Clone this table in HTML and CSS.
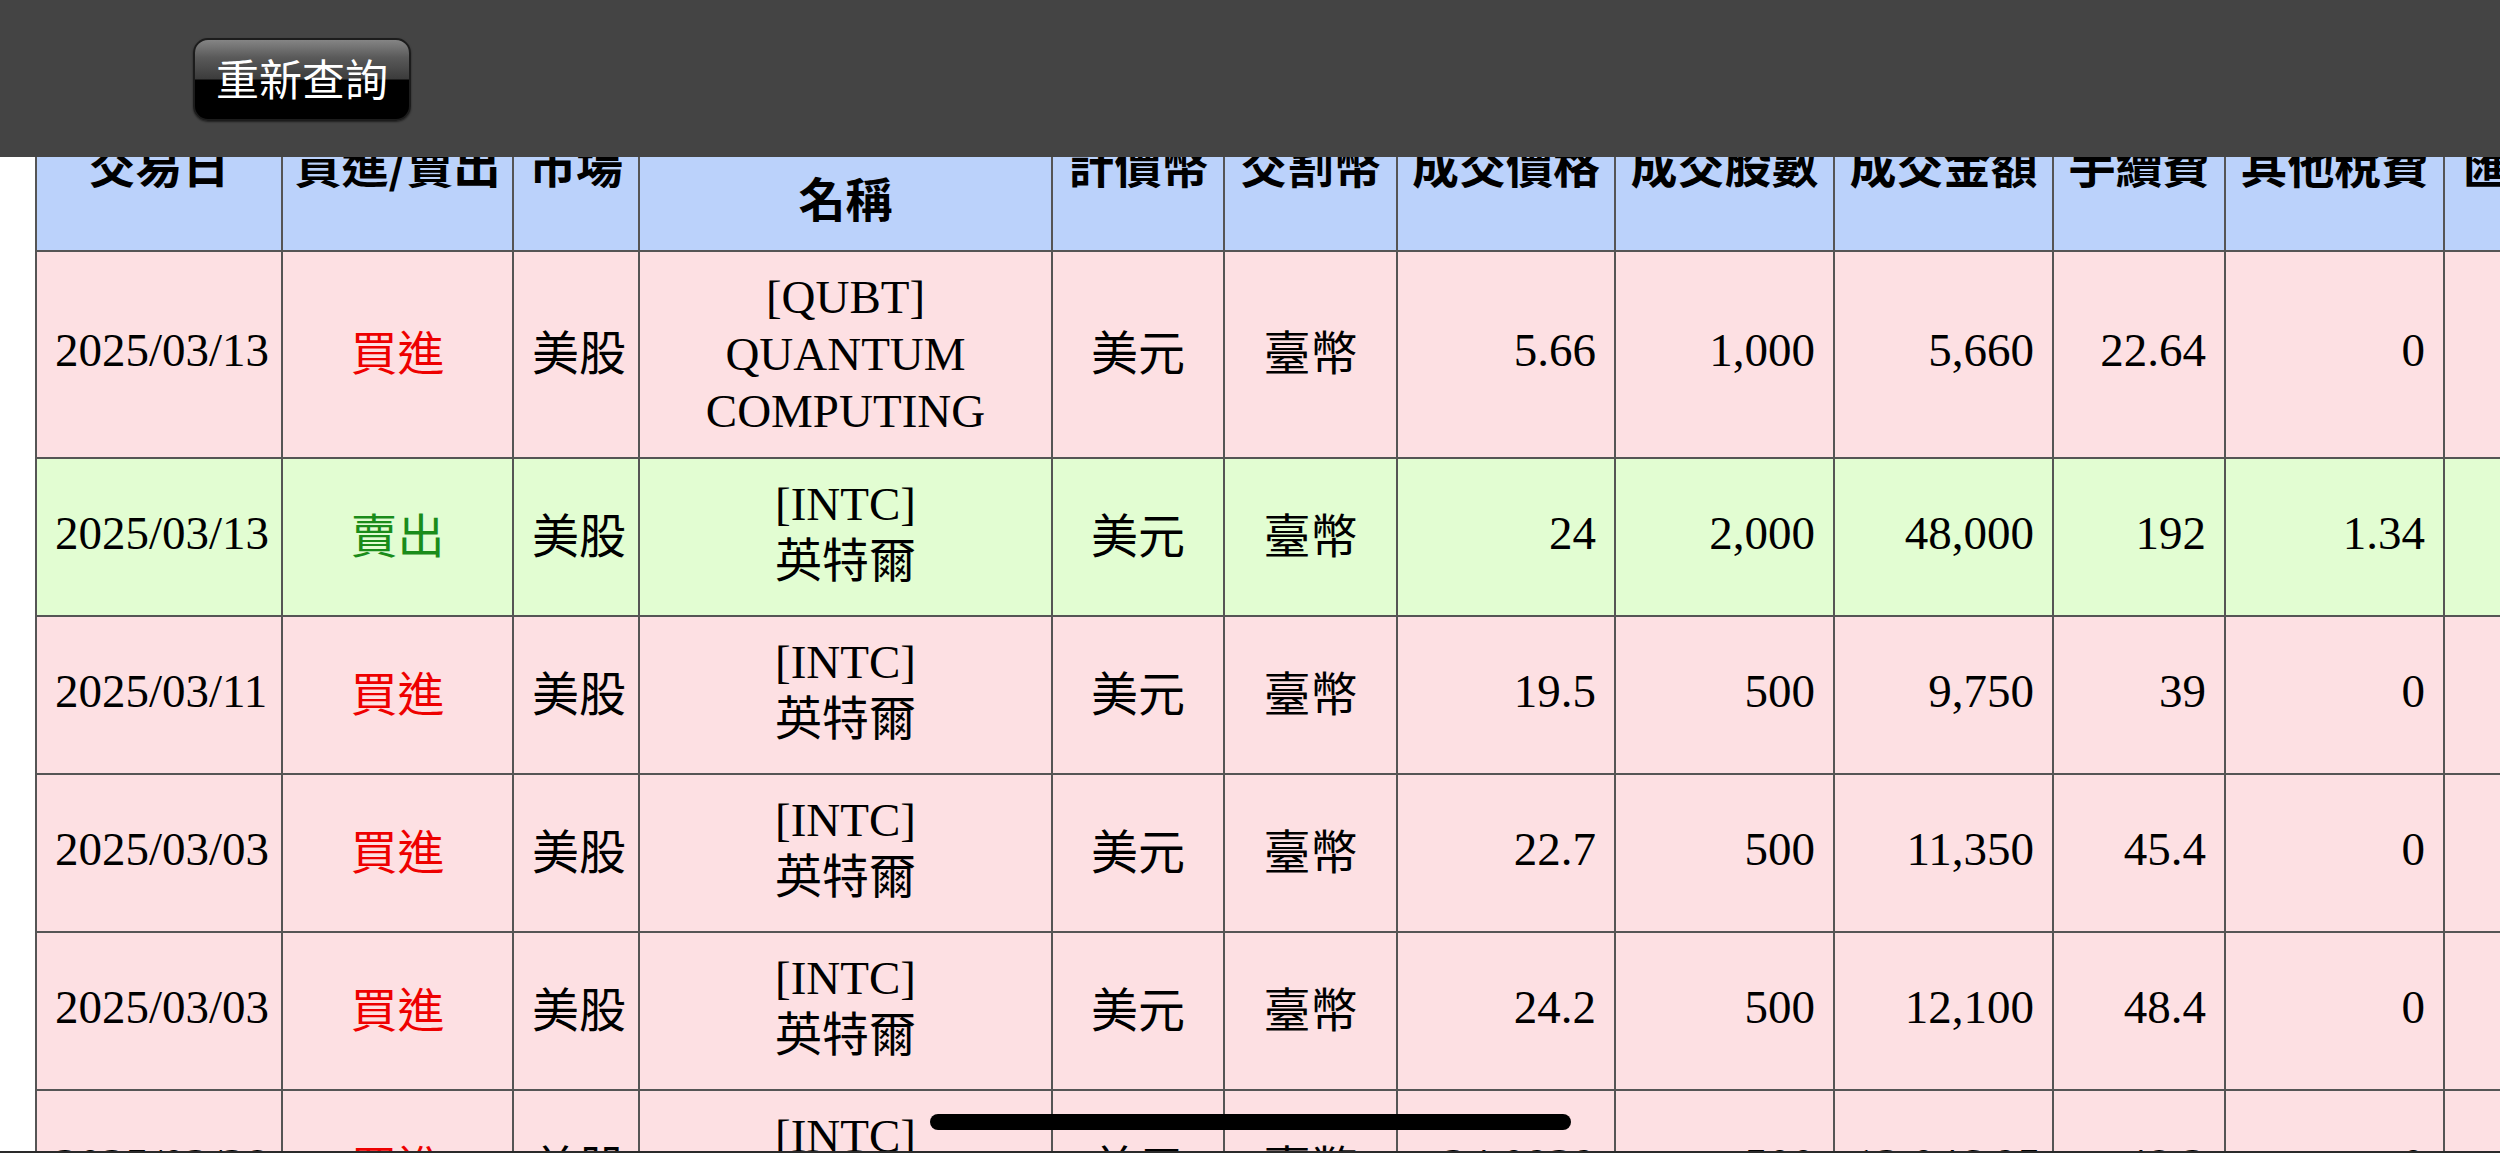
FILE: index.html
```html
<!DOCTYPE html>
<html lang="zh-Hant">
<head>
<meta charset="utf-8">
<title>交易明細</title>
<link rel="stylesheet" href="styles.css">
</head>
<body>
<header class="topbar">
  <button class="btn" type="button">重新查詢</button>
</header>

<main class="page">
  <table class="grid">
    <thead>
      <tr>
        <th class="w-date">交易日</th>
        <th class="w-side">買進/賣出</th>
        <th class="w-mkt">市場</th>
        <th class="w-name name">名稱</th>
        <th class="w-cur">計價幣</th>
        <th class="w-cur2">交割幣</th>
        <th class="w-num">成交價格</th>
        <th class="w-num2">成交股數</th>
        <th class="w-num2">成交金額</th>
        <th class="w-fee">手續費</th>
        <th class="w-num2">其他稅費</th>
        <th class="w-last last">匯率</th>
      </tr>
    </thead>
    <tbody>
      <tr class="buy">
        <td class="lat">2025/03/13</td>
        <td class="red">買進</td>
        <td>美股</td>
        <td><span class="ln">[QUBT]</span><span class="ln">QUANTUM</span><span class="ln">COMPUTING</span></td>
        <td>美元</td>
        <td>臺幣</td>
        <td class="lat num">5.66</td>
        <td class="lat num">1,000</td>
        <td class="lat num">5,660</td>
        <td class="lat num">22.64</td>
        <td class="lat num">0</td>
        <td class="lat num"></td>
      </tr>
      <tr class="sell">
        <td class="lat">2025/03/13</td>
        <td class="green">賣出</td>
        <td>美股</td>
        <td><span class="ln">[INTC]</span><span class="ln ln-cjk">英特爾</span></td>
        <td>美元</td>
        <td>臺幣</td>
        <td class="lat num">24</td>
        <td class="lat num">2,000</td>
        <td class="lat num">48,000</td>
        <td class="lat num">192</td>
        <td class="lat num">1.34</td>
        <td class="lat num"></td>
      </tr>
      <tr class="buy">
        <td class="lat">2025/03/11</td>
        <td class="red">買進</td>
        <td>美股</td>
        <td><span class="ln">[INTC]</span><span class="ln ln-cjk">英特爾</span></td>
        <td>美元</td>
        <td>臺幣</td>
        <td class="lat num">19.5</td>
        <td class="lat num">500</td>
        <td class="lat num">9,750</td>
        <td class="lat num">39</td>
        <td class="lat num">0</td>
        <td class="lat num"></td>
      </tr>
      <tr class="buy">
        <td class="lat">2025/03/03</td>
        <td class="red">買進</td>
        <td>美股</td>
        <td><span class="ln">[INTC]</span><span class="ln ln-cjk">英特爾</span></td>
        <td>美元</td>
        <td>臺幣</td>
        <td class="lat num">22.7</td>
        <td class="lat num">500</td>
        <td class="lat num">11,350</td>
        <td class="lat num">45.4</td>
        <td class="lat num">0</td>
        <td class="lat num"></td>
      </tr>
      <tr class="buy">
        <td class="lat">2025/03/03</td>
        <td class="red">買進</td>
        <td>美股</td>
        <td><span class="ln">[INTC]</span><span class="ln ln-cjk">英特爾</span></td>
        <td>美元</td>
        <td>臺幣</td>
        <td class="lat num">24.2</td>
        <td class="lat num">500</td>
        <td class="lat num">12,100</td>
        <td class="lat num">48.4</td>
        <td class="lat num">0</td>
        <td class="lat num"></td>
      </tr>
      <tr class="buy">
        <td class="lat">2025/02/28</td>
        <td class="red">買進</td>
        <td>美股</td>
        <td><span class="ln">[INTC]</span><span class="ln ln-cjk">英特爾</span></td>
        <td>美元</td>
        <td>臺幣</td>
        <td class="lat num">24.0939</td>
        <td class="lat num">500</td>
        <td class="lat num">12,046.95</td>
        <td class="lat num">48.2</td>
        <td class="lat num">0</td>
        <td class="lat num"></td>
      </tr>
    </tbody>
  </table>
</main>

<div class="home-indicator"></div>
<div class="bottom-edge"></div>
</body>
</html>
```

FILE: styles.css
```css
html, body {
  margin: 0;
  padding: 0;
  background: #ffffff;
  overflow: hidden;
}

body {
  font-family: "Liberation Serif", "Noto Sans CJK TC", serif;
}

/* fixed top toolbar that covers the scrolled table header */
.topbar {
  position: fixed;
  top: 0;
  left: 0;
  right: 0;
  height: 157px;
  background: #444444;
  display: flex;
  align-items: flex-start;
  padding: 38px 0 0 193px;
  box-sizing: border-box;
  z-index: 10;
}

.btn {
  box-sizing: border-box;
  width: 218px;
  height: 83px;
  border-radius: 15px;
  border: 2px solid #1c1c1c;
  background: linear-gradient(to bottom, #858585 0%, #5a5a5a 22%, #3c3c3c 49%, #000000 51%, #000000 100%);
  color: #ffffff;
  font-family: "Noto Sans CJK TC", "Noto Sans", sans-serif;
  font-size: 43px;
  font-weight: 400;
  line-height: 1;
  padding: 0 0 4px;
  box-shadow: 0 1px 2px rgba(0, 0, 0, 0.55);
}

.page {
  padding: 128px 0 0 35px;
}

.grid {
  border-collapse: collapse;
  table-layout: fixed;
  width: 2668px;
  font-size: 47px;
  font-family: "Liberation Serif", "Noto Sans CJK TC", serif;
  color: #000000;
}

.grid th,
.grid td {
  box-sizing: border-box;
  border: 2px solid #555555;
}

.grid th {
  background: #bbd2fb;
  font-family: "Noto Sans CJK TC", "Noto Sans", sans-serif;
  font-weight: 700;
  font-size: 47px;
  line-height: 56px;
  height: 122px;
  padding: 5px 8px 0;
  vertical-align: top;
  text-align: center;
  white-space: nowrap;
  overflow: hidden;
}

.grid th.name {
  vertical-align: middle;
  padding-top: 13px;
}

.grid th.last {
  text-align: left;
  padding-left: 18px;
}

.w-date { width: 246px; }
.w-side { width: 231px; }
.w-mkt  { width: 126px; }
.w-name { width: 413px; }
.w-cur  { width: 172px; }
.w-cur2 { width: 173px; }
.w-num  { width: 218px; }
.w-num2 { width: 219px; }
.w-fee  { width: 172px; }
.w-last { width: 260px; }

.grid td {
  padding: 17px 18px;
  line-height: 57px;
  text-align: center;
  vertical-align: middle;
  white-space: nowrap;
}

.grid td.lat {
  padding-top: 13px;
  padding-bottom: 21px;
}

.grid td.num {
  text-align: right;
}

.grid tr.buy td {
  background: #fde0e3;
}

.grid tr.sell td {
  background: #e2fdd2;
}

.red {
  color: #ee0000;
}

.green {
  color: #1a8c1a;
}

.ln {
  display: block;
  height: 57px;
}

.ln-cjk {
  height: 65px;
}

.home-indicator {
  position: fixed;
  left: 50%;
  bottom: 23px;
  width: 641px;
  height: 16px;
  margin-left: -320px;
  border-radius: 8px;
  background: #000000;
  z-index: 11;
}

.bottom-edge {
  position: fixed;
  left: 0;
  right: 0;
  bottom: 0;
  height: 2px;
  background: #2a2a2a;
  z-index: 11;
}
```
